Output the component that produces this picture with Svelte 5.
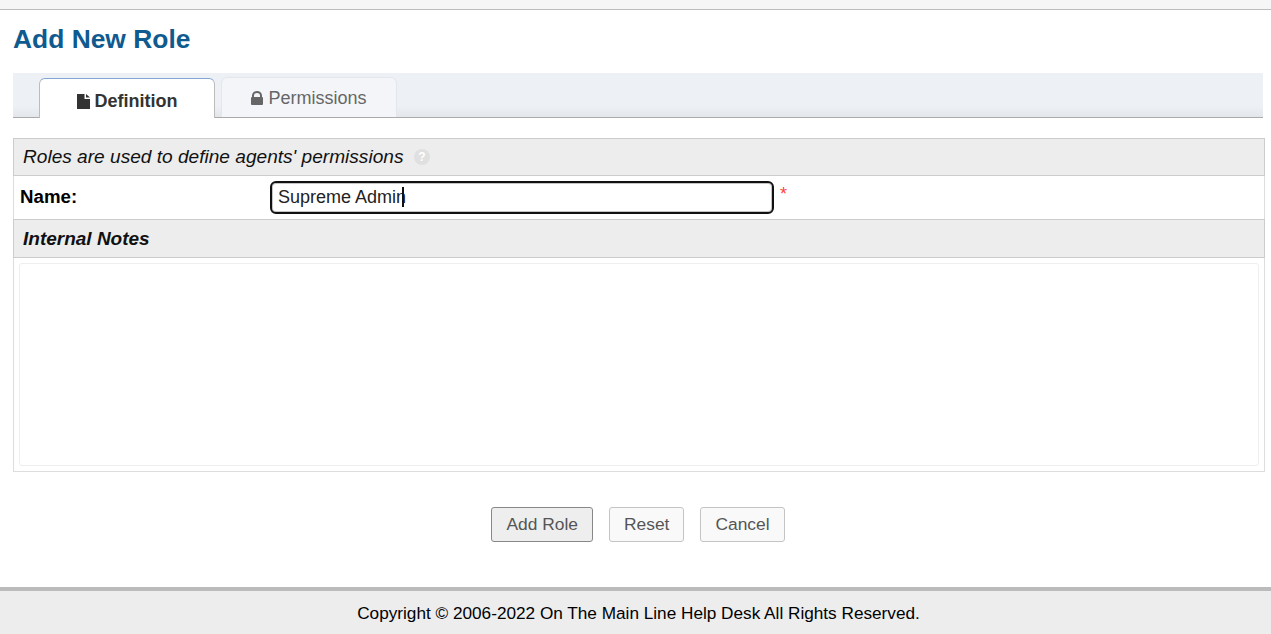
<script>
  let name = $state('Supreme Admin')
  const tabs = [
    { label: 'Definition', icon: 'file', active: true },
    { label: 'Permissions', icon: 'lock', active: false },
  ]
  const buttons = [
    { label: 'Add Role', primary: true },
    { label: 'Reset', primary: false },
    { label: 'Cancel', primary: false },
  ]
</script>

<div class="page">
  <div class="topbar"></div>
  <main class="content">
    <h1>Add New Role</h1>

    <nav class="tabs">
      {#each tabs as tab}
        <div class="tab" class:active={tab.active}>
          {#if tab.icon === 'file'}
            <svg width="13" height="15" viewBox="0 0 13 15"><path d="M0 0h7.5v5H13v10H0zM9 0l4 3.6H9z" fill="currentColor" /></svg>
          {:else}
            <svg width="12" height="14" viewBox="0 0 12 14"><path fill-rule="evenodd" d="M1 6V4.5a5 4.5 0 0 1 10 0V6a1 1 0 0 1 1 1v6a1 1 0 0 1-1 1H1a1 1 0 0 1-1-1V7a1 1 0 0 1 1-1zm2 0h6V4.5a3 2.6 0 0 0-6 0z" fill="currentColor" /></svg>
          {/if}
          <span>{tab.label}</span>
        </div>
      {/each}
    </nav>

    <section class="form">
      <div class="band intro">
        <span>Roles are used to define agents' permissions</span>
        <svg class="help" width="16" height="16" viewBox="0 0 16 16">
          <circle cx="8" cy="8" r="8" fill="#e0e0e0" />
          <text x="8" y="12" text-anchor="middle">?</text>
        </svg>
      </div>
      <div class="row">
        <label for="role-name">Name:</label>
        <div class="field">
          <span class="input-wrap">
            <input id="role-name" bind:value={name} />
            <span class="caret"></span>
          </span>
          <span class="req">*</span>
        </div>
      </div>
      <div class="band notes">Internal Notes</div>
      <div class="notes-body">
        <div class="editor"></div>
      </div>
    </section>

    <div class="actions">
      {#each buttons as button}
        <button type="button" class:primary={button.primary}>{button.label}</button>
      {/each}
    </div>
  </main>
  <footer>Copyright © 2006-2022 On The Main Line Help Desk All Rights Reserved.</footer>
</div>

<style>
  :global(body) {
    margin: 0;
    background: #fff;
    font-family: "Liberation Sans", Arial, sans-serif;
  }

  .page {
    height: 634px;
    display: flex;
    flex-direction: column;
    overflow: hidden;
  }

  .topbar {
    height: 9px;
    flex-shrink: 0;
    background: #f6f6f6;
    border-bottom: 1px solid #bbb;
  }

  .content {
    flex: 1;
    padding: 0 6px 0 13px;
  }

  h1 {
    margin: 0;
    height: 63px;
    font-size: 26.4px;
    line-height: 58px;
    font-weight: 700;
    color: #0f5a8f;
  }

  .tabs {
    display: flex;
    align-items: flex-end;
    gap: 6px;
    height: 45px;
    width: 1250px;
    padding-left: 26px;
    box-sizing: border-box;
    background: linear-gradient(#edf1f6 75%, #e3e7ec);
    border-bottom: 1px solid #aaa;
  }

  .tab {
    display: flex;
    align-items: center;
    justify-content: center;
    gap: 5px;
    box-sizing: border-box;
    width: 176px;
    height: 40px;
    padding-top: 1px;
    background: #f3f5f9;
    border: 1px solid #e3e6ea;
    border-bottom: 0;
    border-radius: 6px 6px 0 0;
    color: #666;
    font-size: 18px;
  }

  .tab.active {
    height: 40px;
    padding-top: 6px;
    margin-bottom: -1px;
    background: #fff;
    border-color: #bbb;
    border-top: 1px solid #7fa6d6;
    color: #333;
    font-weight: 700;
  }

  .form {
    margin-top: 20px;
    border: 1px solid #ddd;
    border-top: 0;
  }

  .band {
    display: flex;
    align-items: center;
    box-sizing: border-box;
    padding-left: 9px;
    background: #ededed;
    border: 1px solid #ccc;
    margin: 0 -1px;
    font-size: 19px;
    font-style: italic;
    color: #111;
  }

  .intro {
    height: 38px;
    gap: 11px;
    font-size: 19.1px;
  }

  .help {
    flex-shrink: 0;
  }

  .help text {
    fill: #fff;
    font-size: 12px;
    font-weight: 700;
    font-style: normal;
  }

  .row {
    display: grid;
    grid-template-columns: 250px 1fr;
    align-items: center;
    height: 43px;
    padding-left: 6px;
    background: #fff;
  }

  label {
    padding-bottom: 2px;
    font-size: 18.7px;
    font-weight: 700;
    color: #000;
  }

  .field {
    display: flex;
    align-items: flex-start;
    gap: 6px;
  }

  .input-wrap {
    position: relative;
    display: block;
  }

  input {
    display: block;
    box-sizing: border-box;
    width: 504px;
    height: 33px;
    padding: 0 6px;
    border: 2px solid #111;
    border-radius: 6px;
    box-shadow: inset 0 0 0 1px #c4c4c4;
    outline: none;
    font: 18px "Liberation Sans", Arial, sans-serif;
    color: #222;
  }

  .caret {
    position: absolute;
    left: 132px;
    top: 6px;
    width: 2px;
    height: 20px;
    background: #111;
  }

  .req {
    margin-top: 3px;
    color: #f44;
    font-size: 18px;
    line-height: 20px;
  }

  .notes {
    height: 39px;
    font-weight: 700;
  }

  .notes-body {
    padding: 5px;
  }

  .editor {
    height: 201px;
    border: 1px solid #eee;
    border-radius: 3px;
  }

  .actions {
    display: flex;
    justify-content: center;
    gap: 16px;
    margin-top: 35px;
    padding-right: 2px;
  }

  button {
    height: 35px;
    padding: 0 14px;
    background: #f9f9f9;
    border: 1px solid #c4c4c4;
    border-radius: 3px;
    color: #555;
    font: 17.4px "Liberation Sans", Arial, sans-serif;
  }

  button.primary {
    background: #eee;
    border-color: #888;
  }

  footer {
    flex-shrink: 0;
    height: 43px;
    padding-left: 6px;
    line-height: 44px;
    background: #ededed;
    border-top: 4px solid #bbb;
    text-align: center;
    font-size: 17.2px;
    color: #000;
  }
</style>
